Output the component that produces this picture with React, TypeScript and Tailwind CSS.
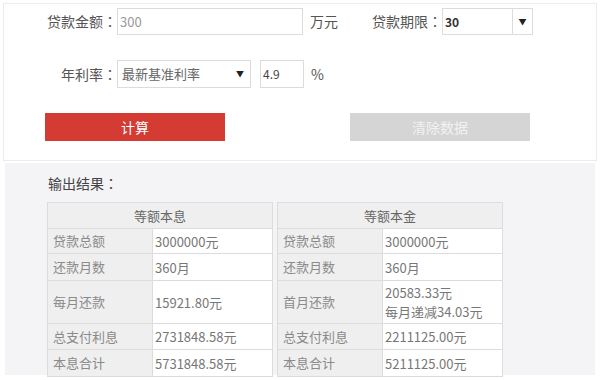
const font = { fontFamily: '"Noto Sans CJK SC", "Liberation Sans", sans-serif' };
const colonFont = { fontFamily: '"Noto Sans CJK TC", sans-serif' };

type Row = { label: string; value: string[]; h: string };

const tables: { title: string; rows: Row[] }[] = [
  {
    title: "等额本息",
    rows: [
      { label: "贷款总额", value: ["3000000元"], h: "h-[25px]" },
      { label: "还款月数", value: ["360月"], h: "h-[27px]" },
      { label: "每月还款", value: ["15921.80元"], h: "h-[43px]" },
      { label: "总支付利息", value: ["2731848.58元"], h: "h-[26px]" },
      { label: "本息合计", value: ["5731848.58元"], h: "h-[26px]" },
    ],
  },
  {
    title: "等额本金",
    rows: [
      { label: "贷款总额", value: ["3000000元"], h: "h-[25px]" },
      { label: "还款月数", value: ["360月"], h: "h-[27px]" },
      { label: "首月还款", value: ["20583.33元", "每月递减34.03元"], h: "h-[43px]" },
      { label: "总支付利息", value: ["2211125.00元"], h: "h-[26px]" },
      { label: "本息合计", value: ["5211125.00元"], h: "h-[26px]" },
    ],
  },
];

function Label({ text, w }: { text: string; w: string }) {
  return (
    <div className={`${w} text-right text-[14px] text-[#555]`}>
      {text}
      <span style={colonFont}>：</span>
    </div>
  );
}

function ResultTable({ title, rows }: { title: string; rows: Row[] }) {
  return (
    <div className="w-[226px] border border-[#dcdcdc] bg-[#efefef]">
      <div className="h-[26px] border-b border-[#dcdcdc] flex items-center justify-center text-[13px] text-[#666]">
        {title}
      </div>
      {rows.map((r, i) => (
        <div
          key={r.label}
          className={`flex ${r.h} ${i < rows.length - 1 ? "border-b border-[#dcdcdc]" : ""}`}
        >
          <div className="w-[105px] shrink-0 border-r border-[#dcdcdc] flex items-center pl-[5px] text-[13px] text-[#8a8a8a]">
            {r.label}
          </div>
          <div className="flex-1 bg-white flex flex-col justify-center pl-[2px] text-[13px] text-[#777] leading-[19px]">
            {r.value.map((v) => (
              <span key={v}>{v}</span>
            ))}
          </div>
        </div>
      ))}
    </div>
  );
}

export default function App() {
  return (
    <div className="w-[600px] h-[380px] bg-white overflow-hidden" style={font}>
      {/* 表单区 */}
      <div className="mx-[3px] mt-[3px] h-[158px] border border-[#ececec] bg-white pt-[4px]">
        <div className="flex items-center h-[27px]">
          <Label text="贷款金额" w="w-[113px]" />
          <div className="w-[186px] h-[27px] border border-[#dcdcdc] flex items-center pl-[2px] text-[13px] text-[#999]">
            300
          </div>
          <div className="ml-[7px] text-[14px] text-[#555]">万元</div>
          <Label text="贷款期限" w="w-[104px]" />
          <div className="w-[91px] h-[27px] border border-[#dcdcdc] flex">
            <div className="flex-1 flex items-center pl-[2px] text-[12px] font-bold text-[#333]">30</div>
            <div className="w-[20px] border-l border-[#dcdcdc] flex items-center justify-center text-[8px] text-[#222]">
              ▼
            </div>
          </div>
        </div>

        <div className="flex items-center h-[28px] mt-[25px]">
          <Label text="年利率" w="w-[113px]" />
          <div className="w-[134px] h-[28px] border border-[#dcdcdc] flex items-center justify-between pl-[4px] pr-[6px] text-[13px] text-[#666]">
            <span>最新基准利率</span>
            <span className="text-[8px] text-[#222]">▼</span>
          </div>
          <div className="ml-[9px] w-[44px] h-[28px] border border-[#dcdcdc] flex items-center pl-[2px] text-[12px] text-[#444]">
            4.9
          </div>
          <div className="ml-[7px] text-[14px] text-[#555]">%</div>
        </div>

        <div className="flex mt-[25px]">
          <div className="ml-[41px] w-[180px] h-[28px] bg-[#d33b33] flex items-center justify-center text-[14px] text-white">
            计算
          </div>
          <div className="ml-[125px] w-[180px] h-[28px] bg-[#d5d5d5] flex items-center justify-center text-[14px] text-[#f2f2f2]">
            清除数据
          </div>
        </div>
      </div>

      {/* 输出结果 */}
      <div className="mx-[5px] mt-[2px] h-[212px] bg-[#f4f3f6] pt-[10px] pl-[42px]">
        <div className="h-[20px] flex items-center pl-[1px] text-[14px] text-[#444]">
          输出结果<span style={colonFont}>：</span>
        </div>
        <div className="flex gap-[4px] mt-[9px]">
          {tables.map((t) => (
            <ResultTable key={t.title} title={t.title} rows={t.rows} />
          ))}
        </div>
      </div>
    </div>
  );
}
